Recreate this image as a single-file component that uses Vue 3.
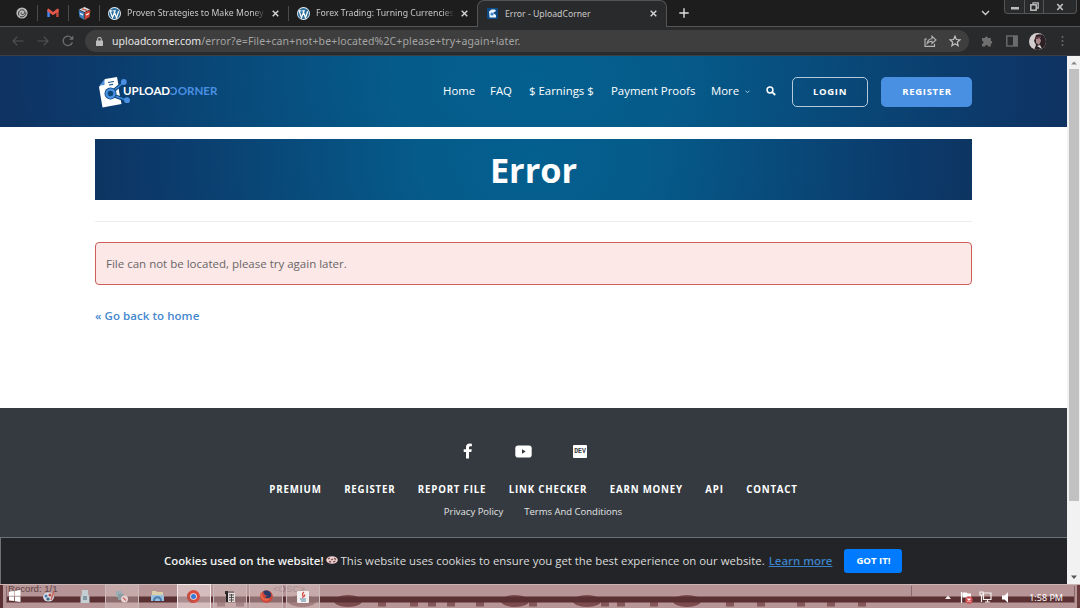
<template>
  <div class="screen">
    <header class="tab-strip">
      <div class="pinned">
        <svg width="12" height="12" viewBox="0 0 12 12">
          <circle cx="6" cy="6" r="5.6" fill="#b9b9b9" />
          <path d="M3 8.6C1.6 5 4 2.4 6.6 2.8c2.4.4 3 3.2 1.2 4.4-1.5 1-3.3-.2-2.5-1.7M4 9.6c3 1 6-1 5.8-4" fill="none" stroke="#333" stroke-width="1" />
        </svg>
      </div>
      <div class="pinned">
        <svg width="12" height="10" viewBox="0 0 12 10">
          <path d="M.3 2v7h2.5V4.2z" fill="#4285f4" />
          <path d="M11.7 2v7H9.2V4.2z" fill="#c5473c" />
          <path d="M.3 1.2 1.6.6 6 4l4.4-3.4 1.3.6v2L6 7.2.3 3.2z" fill="#e4584b" />
        </svg>
      </div>
      <div class="pinned">
        <svg width="13" height="13" viewBox="0 0 13 13">
          <path d="M6.5 0 12 2.5 6.5 5 1 2.5z" fill="#d8dce2" />
          <path d="M.5 3 6.3 5.6V13L1.5 10z" fill="#3f7eb8" />
          <path d="M12.5 3 6.7 5.6V13l4.800-3z" fill="#cf4535" />
          <path d="M2 6.5l3 1.5M8 8l3-1.5" stroke="#fff" stroke-width="1.3" />
          <path d="M4 1.8l5 1.5" stroke="#c9564a" stroke-width="1.3" />
        </svg>
      </div>

      <div v-for="tab in tabs" :key="tab.title" class="tab" :class="{ active: tab.active }">
        <svg v-if="!tab.active" class="favicon" width="13" height="13" viewBox="0 0 13 13">
          <circle cx="6.5" cy="6.5" r="6.5" fill="#e4eef5" />
          <circle cx="6.5" cy="6.5" r="5.6" fill="#2c6f9e" />
          <path d="M2 3.8 4.5 10.6 6.5 5.2 8.5 10.6 10.7 4.2M1.6 3.8h2.8M5.3 3.8h2.6" fill="none" stroke="#fff" stroke-width="1.2" />
        </svg>
        <svg v-else class="favicon" width="11" height="11" viewBox="0 0 11 11">
          <rect width="11" height="11" rx="1" fill="#0b4a86" />
          <path d="M2 3.5 4.5 1.5H8L9 3 6 5l3 2v2.5H2.6z" fill="#eaf3fb" />
          <circle cx="5" cy="6" r="1.6" fill="#3c84cf" />
        </svg>
        <span class="tab-title">{{ tab.title }}</span>
        <svg class="tab-close" width="7" height="7" viewBox="0 0 7 7">
          <path d="M.7.7l5.6 5.6M6.3.7.7 6.3" stroke="#d6d6d6" stroke-width="1.4" />
        </svg>
      </div>

      <svg class="new-tab" width="10" height="10" viewBox="0 0 10 10">
        <path d="M5 .3v9.4M.3 5h9.4" stroke="#dedede" stroke-width="1.4" />
      </svg>
      <svg class="tab-search" width="9" height="6" viewBox="0 0 9 6">
        <path d="M1 1l3.5 3.5L8 1" fill="none" stroke="#cfcfcf" stroke-width="1.4" />
      </svg>
      <div class="window-buttons">
        <span><svg class="minimize" width="8" height="3"><rect width="8" height="2.5" fill="#bdbdbd" /></svg></span>
        <span>
          <svg width="9" height="9" viewBox="0 0 9 9">
            <path d="M3 2.5V.8h5.2V6H6.8" fill="none" stroke="#bdbdbd" stroke-width="1.3" />
            <rect x=".8" y="2.8" width="5.4" height="5.4" fill="none" stroke="#bdbdbd" stroke-width="1.5" />
          </svg>
        </span>
        <span>
          <svg width="8" height="8" viewBox="0 0 8 8">
            <path d="M1.3 1l5.4 6M6.7 1 1.3 7" stroke="#bdbdbd" stroke-width="1.7" />
          </svg>
        </span>
      </div>
    </header>

    <div class="toolbar">
      <svg width="12" height="10" viewBox="0 0 12 10">
        <path d="M11.5 5H1M5.3.7 1 5l4.3 4.3" fill="none" stroke="#505254" stroke-width="1.2" />
      </svg>
      <svg width="12" height="10" viewBox="0 0 12 10">
        <path d="M.5 5H11M6.7.7 11 5 6.7 9.3" fill="none" stroke="#505254" stroke-width="1.2" />
      </svg>
      <svg width="12" height="12" viewBox="0 0 12 12">
        <path d="M10.4 7.2A4.7 4.7 0 1 1 9.5 2.8L10.8 4" fill="none" stroke="#6c6c6c" stroke-width="1.3" />
        <path d="M11.3.6v4.2H7.1z" fill="#6c6c6c" />
      </svg>
      <div class="omnibox">
        <svg width="7" height="9" viewBox="0 0 7 9">
          <rect y="3.5" width="7" height="5.5" rx=".6" fill="#bdbdbd" />
          <path d="M1.7 4V2.3a1.8 1.8 0 0 1 3.6 0V4" fill="none" stroke="#bdbdbd" stroke-width="1.1" />
        </svg>
        <span class="url"><b>uploadcorner.com</b>/error?e=File+can+not+be+located%2C+please+try+again+later.</span>
        <svg width="13" height="12" viewBox="0 0 13 12">
          <path d="M3 4H1v7.3h9.5V8.8" fill="none" stroke="#b4b4b4" stroke-width="1.2" />
          <path d="M3.2 8.4C3.5 5.3 5.4 3.8 8 3.7V1.2L12 5 8 8.5V6.2C6 6.1 4.5 6.8 3.2 8.4z" fill="none" stroke="#b4b4b4" stroke-width="1.1" />
        </svg>
        <svg class="star" width="12" height="12" viewBox="0 0 12 12">
          <path d="M6 1.2 7.4 4.5l3.6.3-2.7 2.4.8 3.5L6 8.8l-3.1 1.9.8-3.5L1 4.8l3.6-.3z" fill="none" stroke="#c4c4c4" stroke-width="1.2" />
        </svg>
      </div>
      <svg class="puzzle" width="12" height="12" viewBox="0 0 12 12">
        <path d="M1 3h2.8a1.6 1.6 0 1 1 3.2 0H9.8v2.8a1.5 1.5 0 1 1 0 3V11.5H7.2a1.6 1.6 0 0 0-3.2 0H1V8.8a1.5 1.5 0 0 0 0-3z" fill="#6f6f6f" />
      </svg>
      <svg class="panel" width="12" height="12" viewBox="0 0 12 12">
        <rect x=".8" y="1" width="10.4" height="10" fill="none" stroke="#6c6c6c" stroke-width="1.4" />
        <rect x="7" y="1" width="4.5" height="10" fill="#6c6c6c" />
      </svg>
      <svg class="avatar" width="17" height="17" viewBox="0 0 17 17">
        <clipPath id="face"><circle cx="8.5" cy="8.5" r="8.5" /></clipPath>
        <g clip-path="url(#face)">
          <rect width="17" height="17" fill="#d3cccd" />
          <path d="M7 2c5-2 8 0 10 3v12H5l2-5-2-4z" fill="#2b2125" />
          <path d="M7 6l4-1 1 3-2 4-3-2z" fill="#a98689" />
          <path d="M8 13l3-1 2 4z" fill="#e4dfe0" />
          <path d="M6 5l6-1" stroke="#6c3d4b" stroke-width="1.5" />
        </g>
      </svg>
      <svg class="kebab" width="3" height="12" viewBox="0 0 3 12">
        <circle v-for="y in [2, 6, 10]" :key="y" cx="1.5" :cy="y" r="1" fill="#6c6c6c" />
      </svg>
    </div>

    <div class="viewport">
      <div class="page">
        <div class="site-header">
          <div class="logo">
            <svg width="34" height="34" viewBox="0 0 34 34">
              <path d="M1 12 7 4l12-2 1.5 8 .5 6 2.5 13L4.500 32.500z" fill="#fff" />
              <path d="M1.5 10.5 6.5 4.5V10z" fill="#4a90e2" />
              <path d="M10 7.5l6-1M11 10l4-.7" stroke="#174f86" stroke-width="1.2" />
              <path d="M14 17 25.5 7.5M14 20l14 5" stroke="#0b4678" stroke-width="3.5" />
              <path d="M14 17 25.5 7.5M14 20l14 5" stroke="#3f86d8" stroke-width="1.5" />
              <circle cx="12.5" cy="18.5" r="6" fill="#0b4678" />
              <circle cx="12.5" cy="18.5" r="4" fill="none" stroke="#4a90e2" stroke-width="2.4" />
              <circle cx="25.8" cy="7" r="2.9" fill="#4a90e2" />
              <circle cx="29" cy="25.2" r="2.9" fill="#4a90e2" />
            </svg>
            <span class="wordmark">UPLOAD<i><em>C</em>ORNER</i></span>
          </div>
          <nav class="nav">
            <a class="home">Home</a>
            <a class="faq">FAQ</a>
            <a class="earnings">$ Earnings $</a>
            <a class="proofs">Payment Proofs</a>
            <a class="more">More</a>
            <svg class="caret" width="5" height="4" viewBox="0 0 5 4">
              <path d="M.5.7l2 2 2-2" fill="none" stroke="#a5c6dd" stroke-width="1" />
            </svg>
            <svg class="search" width="10" height="10" viewBox="0 0 10 10">
              <circle cx="4" cy="4" r="2.9" fill="none" stroke="#fff" stroke-width="1.5" />
              <path d="M6.2 6.2 9.2 9" stroke="#fff" stroke-width="1.8" />
            </svg>
          </nav>
          <a class="btn btn-outline">LOGIN</a>
          <a class="btn btn-primary">REGISTER</a>
        </div>

        <main class="content">
          <h1>Error</h1>
          <div class="rule"></div>
          <div class="alert"><span>File can not be located, please try again later.</span></div>
          <a class="back">« Go back to home</a>
        </main>

        <footer class="site-footer">
          <div class="social">
            <svg width="10" height="16" viewBox="0 0 10 16">
              <path d="M3 15.5V9H.7V6.2H3V4.3C3 2 4.3.6 6.6.6L8.9.8v2.4H7.6C6.4 3.2 6 3.9 6 4.7v1.5h2.8L8.3 9H6v6.5z" fill="#fff" />
            </svg>
            <svg width="17" height="13" viewBox="0 0 17 13">
              <rect x=".3" y=".5" width="16.4" height="12" rx="2.8" fill="#fff" />
              <path d="M7 4.2v4.6l3.7-2.3z" fill="#343a40" />
            </svg>
            <div class="dev">DEV</div>
          </div>
          <div class="links">
            <a v-for="link in footerLinks" :key="link">{{ link }}</a>
          </div>
          <div class="legal">
            <a>Privacy Policy</a>
            <a>Terms And Conditions</a>
          </div>
        </footer>

        <div class="cookies">
          <strong>Cookies used on the website!</strong>
          <svg width="12" height="8" viewBox="0 0 12 8">
            <ellipse cx="6" cy="4" rx="5.8" ry="3.8" fill="#ecd0cf" />
            <path d="M2 3l2-1M5 4l2-1M8 2.3l2 1M3 5.5l2 .5M7 6l2.5-1" stroke="#75484a" stroke-width="1.3" />
          </svg>
          <span>This website uses cookies to ensure you get the best experience on our website.</span>
          <a>Learn more</a>
          <button>GOT IT!</button>
        </div>
      </div>
      <div class="scrollbar">
        <svg width="12" height="13" viewBox="0 0 12 13"><path d="M3 8.5 6 5.5l3 3z" fill="#8a8a8a" /></svg>
        <div class="thumb"></div>
        <svg class="down" width="12" height="13" viewBox="0 0 12 13"><path d="M3 4.5h6l-3 3.5z" fill="#555" /></svg>
      </div>
    </div>

    <div class="taskbar">
      <!-- desktop showing through the glass -->
      <svg class="glass" width="1080" height="24" viewBox="0 0 1080 24">
        <rect width="1080" height="24" fill="#b79495" />
        <path d="M0 .5h1080" stroke="#cbb5b5" />
        <rect y="1" width="3" height="23" fill="#5b3033" />
        <rect x="1077" y="1" width="3" height="23" fill="#6a3c3e" />
        <ellipse v-for="x in letterArcs" :key="x" :cx="x" cy="17" rx="14" ry="6" fill="#7d4c4e" />
        <rect v-for="x in letterStems" :key="x" :x="x" y="18" width="8" height="4.5" fill="#84585a" />
        <rect x="6" y="12.5" width="1068" height="6" fill="#5a3032" />
        <path d="M6.5 2v17M1074.5 2v17M911.5 2v10" stroke="#88686a" />
      </svg>
      <span class="ghost record">Record: 1/1</span>
      <span class="ghost osc">&lt;OSC&gt;</span>

      <div class="apps">
        <div class="app">
          <svg width="12" height="12" viewBox="0 0 12 12">
            <path d="M0 1.7 5 1v4.7H0zM5.7.9 11.5 0v5.7H5.7zM0 6.4h5v4.7l-5-.7zM5.7 6.4h5.8V12l-5.8-.8z" fill="#fff" />
          </svg>
        </div>
        <div class="app">
          <svg width="12" height="13" viewBox="0 0 12 13">
            <ellipse cx="5.5" cy="7" rx="5.5" ry="4.5" fill="#d5dce4" />
            <circle cx="3" cy="6" r="1.5" fill="#4d7eaf" /><circle cx="7" cy="5" r="1.5" fill="#bf463f" />
            <circle cx="5" cy="9" r="1.6" fill="#38607f" /><path d="M11 1 8 10" stroke="#c9655e" stroke-width="1.5" />
          </svg>
        </div>
        <div class="app">
          <svg width="10" height="13" viewBox="0 0 10 13">
            <path d="M2 0h6v4l1.5 3v6H.5V7L2 4z" fill="#c5ced3" />
            <path d="M3 6h4v4H3z" fill="#8499a4" />
          </svg>
        </div>
        <div class="app open">
          <svg width="13" height="13" viewBox="0 0 13 13">
            <path d="M1 1h6v6H1z" fill="#9aafb5" /><path d="M3 4h6v6H3z" fill="#8c9ea2" />
            <circle cx="9.5" cy="9" r="3.5" fill="#ead1d2" /><path d="M8 7.5l3 3" stroke="#cb6c70" stroke-width="1.3" />
          </svg>
        </div>
        <div class="app">
          <svg width="13" height="12" viewBox="0 0 13 12">
            <path d="M1 1h4l1 1h6v8H1z" fill="#dbd0ac" /><path d="M0 5h13v6H0z" fill="#9bc1df" />
            <path d="M3 11c0-5 7-5 7 0" fill="none" stroke="#487fad" stroke-width="2" />
          </svg>
        </div>
        <div class="app open current">
          <svg width="13" height="13" viewBox="0 0 13 13">
            <circle cx="6.5" cy="6.5" r="6.5" fill="#d84d40" />
            <path d="M.9 3.3A6.5 6.5 0 0 0 6 13L8.5 8z" fill="#bd5145" />
            <circle cx="6.5" cy="6.5" r="3.3" fill="#efe9ee" /><circle cx="6.5" cy="6.5" r="2.5" fill="#3579d5" />
          </svg>
        </div>
        <div class="app open">
          <svg width="12" height="13" viewBox="0 0 12 13">
            <path d="M1 1h3v3H1zM2 4h2v8H2z" fill="#222" /><path d="M4 3h7v9H4z" fill="#e3dcda" />
            <path d="M1 2h9M5 5h5M5 7.5h5M5 10h5M7.5 4v8" stroke="#4a4446" stroke-width=".9" />
          </svg>
        </div>
        <div class="app open">
          <svg width="13" height="13" viewBox="0 0 13 13">
            <circle cx="6.5" cy="6.5" r="6.3" fill="#cb473d" />
            <path d="M3 1.5C7-1 12 2 11 6 10 9 6 9 5 7l3-1-3-1z" fill="#293b68" />
            <path d="M1 3c0 5 3 8 8 6" fill="none" stroke="#e56747" stroke-width="2" />
          </svg>
        </div>
        <div class="app open">
          <svg width="12" height="12" viewBox="0 0 12 12">
            <rect width="12" height="12" rx="1" fill="#f2efee" />
            <path d="M7 1C3 4 8 4.5 5.5 7M8 3.5 6.8 6" fill="none" stroke="#d3443e" stroke-width="1.2" />
            <path d="M3 8h6M4 10h5" stroke="#5686a4" stroke-width="1" />
          </svg>
        </div>
      </div>

      <div class="tray">
        <svg width="6" height="4" viewBox="0 0 6 4"><path d="M0 4l3-3.5L6 4z" fill="#f4eeee" /></svg>
        <svg class="flag" width="13" height="13" viewBox="0 0 13 13">
          <path d="M1.5 1v11" stroke="#fff" stroke-width="1.2" /><path d="M2.5 1.5h4l1 1H11v5H7l-1-1H2.5z" fill="#fff" />
          <circle cx="9" cy="9" r="3.7" fill="#d24e50" /><path d="M7.5 7.5l3 3M10.5 7.5l-3 3" stroke="#fff" stroke-width="1.1" />
        </svg>
        <svg class="net" width="13" height="12" viewBox="0 0 13 12">
          <path d="M4.5 2H12v6.5H4.500zM6 11h5M8.5 8.5V11M1 1h3v3H1zM2.5 4v7" fill="none" stroke="#f6efef" stroke-width="1.2" />
        </svg>
        <svg class="sound" width="7" height="11" viewBox="0 0 7 11"><path d="M0 3.5h2.5L6 .3v10.4L2.5 7.5H0z" fill="#fff" /></svg>
        <span class="clock">1:58 PM</span>
      </div>
    </div>
  </div>
</template>

<script setup>
const tabs = [
  { title: 'Proven Strategies to Make Money', active: false },
  { title: 'Forex Trading: Turning Currencies', active: false },
  { title: 'Error - UploadCorner', active: true }
]

const footerLinks = ['PREMIUM', 'REGISTER', 'REPORT FILE', 'LINK CHECKER', 'EARN MONEY', 'API', 'CONTACT']

const letterArcs = [302, 348, 515, 587, 687]
const letterStems = [217, 236, 378, 410, 428, 447, 476, 529, 601, 617, 650, 726, 757, 797, 827, 858]
</script>

<style>
body {
  margin: 0;
  overflow: hidden;
}
</style>

<style scoped>
* {
  box-sizing: border-box;
}

.screen {
  width: 1080px;
  height: 608px;
  display: flex;
  flex-direction: column;
  overflow: hidden;
  font-family: "Open Sans", "Noto Sans", sans-serif;
  background: #fff;
}

svg {
  display: block;
  flex: none;
}

.tab-strip {
  height: 27px;
  flex: none;
  display: flex;
  align-items: center;
  padding-left: 7px;
  background: #1d1d1d;
  border-bottom: 1px solid #555;
}

.pinned {
  width: 31px;
  height: 16px;
  display: flex;
  align-items: center;
  justify-content: center;
  border-right: 1px solid #4b4b4b;
}

.tab {
  position: relative;
  width: 189px;
  height: 27px;
  display: flex;
  align-items: center;
  padding: 0 10px 0 8px;
  font-family: "Noto Sans", sans-serif;
  font-size: 8.7px;
  color: #c9c9c9;
}

.tab:not(.active)::after {
  content: "";
  position: absolute;
  right: 0;
  top: 6px;
  width: 1px;
  height: 15px;
  background: #4b4b4b;
}

.tab:nth-child(5)::after {
  display: none;
}

.tab.active {
  width: 190px;
  margin-left: -1px;
  padding: 0 9px 0 9px;
  background: #292a2b;
  border: 1px solid #555;
  border-bottom: 0;
  border-radius: 7px 7px 0 0;
}

.tab-title {
  flex: 1;
  margin: 0 4px 0 6px;
  white-space: nowrap;
}

.tab.active .tab-title {
  margin-left: 7px;
}

.tab:not(.active) .tab-title {
  mask-image: linear-gradient(90deg, #000 90%, transparent 98%);
}

.new-tab {
  margin-left: 12px;
}

.tab-search {
  margin-left: auto;
}

.window-buttons {
  display: flex;
  align-self: flex-start;
  height: 14px;
  margin: 0 3px 0 14px;
  border: 1px solid #555;
  border-top: 0;
  border-radius: 0 0 4px 4px;
  background: #292a2b;
}

.window-buttons span {
  width: 19px;
  display: flex;
  align-items: center;
  justify-content: center;
}

.window-buttons span + span {
  border-left: 1px solid #555;
}

.window-buttons span:last-child {
  width: 33px;
}

.minimize {
  margin-top: 4px;
}

.toolbar {
  height: 29px;
  flex: none;
  display: flex;
  align-items: center;
  padding-left: 12px;
  background: #292a2b;
  border-bottom: 1px solid #3a3f45;
}

.toolbar > svg + svg {
  margin-left: 13px;
}

.omnibox {
  width: 884px;
  height: 22px;
  display: flex;
  align-items: center;
  margin-left: 11px;
  padding: 0 8px 0 11px;
  border-radius: 11px;
  background: #3e3e3e;
}

.url {
  flex: 1;
  margin-left: 9px;
  font-family: "Noto Sans", sans-serif;
  font-size: 10.5px;
  letter-spacing: 0.14px;
  color: #a4a4a4;
  white-space: nowrap;
}

.url b {
  font-weight: 400;
  letter-spacing: 0;
  color: #e6e6e6;
}

.star {
  margin-left: 12px;
}

.toolbar .puzzle {
  margin-left: 12px;
}

.toolbar .avatar {
  margin-left: 11px;
}

.toolbar .kebab {
  margin-left: 15px;
}

.viewport {
  height: 528px;
  flex: none;
  display: flex;
}

.page {
  width: 1067px;
  display: flex;
  flex-direction: column;
}

.site-header {
  height: 71px;
  flex: none;
  display: flex;
  align-items: center;
  padding: 0 95px 0 98px;
  background: radial-gradient(ellipse 570px 420px at 50% 30%, #04608f 0%, #055b8a 25%, #0b3c6d 75%, #102f5e 100%);
}

.logo {
  width: 345px;
  display: flex;
  align-items: center;
}

.wordmark {
  margin: 0 0 2px -9px;
  font-family: Lato, sans-serif;
  font-size: 11.5px;
  font-weight: 700;
  color: #fff;
}

.wordmark i {
  font-style: normal;
  color: #4a90e2;
}

.wordmark em {
  display: inline-block;
  font-style: normal;
  transform: scaleX(-1);
}

.nav {
  width: 349px;
  display: flex;
  align-items: center;
  padding-bottom: 2px;
  font-size: 11.4px;
  line-height: 15px;
  color: #fff;
  white-space: nowrap;
}

.home {
  width: 47px;
}

.faq {
  width: 39px;
}

.earnings {
  width: 82px;
}

.proofs {
  width: 100px;
}

.more {
  width: 34px;
}

.caret {
  margin-top: 2px;
}

.search {
  margin: 1px 0 0 16px;
}

.btn {
  height: 30px;
  display: flex;
  align-items: center;
  justify-content: center;
  border-radius: 5px;
  font-size: 9.5px;
  font-weight: 700;
  letter-spacing: 0.7px;
  color: #fff;
}

.btn-outline {
  width: 76px;
  border: 1px solid #b4cadc;
}

.btn-primary {
  width: 91px;
  margin-left: 13px;
  padding-left: 1px;
  background: #4a90e2;
}

.content {
  height: 281px;
  flex: none;
  display: flex;
  flex-direction: column;
  padding: 12px 95px 0 95px;
}

h1 {
  height: 61px;
  margin: 0;
  display: flex;
  align-items: center;
  justify-content: center;
  background: radial-gradient(ellipse 460px 360px at 50% 30%, #04608f 0%, #055b8a 25%, #0b3c6d 78%, #0e335f 100%);
  font-size: 34.3px;
  font-weight: 700;
  color: #fff;
}

.rule {
  height: 1px;
  margin-top: 21px;
  background: #ececec;
}

.alert {
  height: 43px;
  display: flex;
  align-items: center;
  margin-top: 20px;
  padding: 0 0 1px 10px;
  border: 1px solid #cd5c5b;
  border-radius: 4px;
  background: #fde8e8;
  font-size: 11.5px;
  color: #666;
}

.back {
  margin-top: 23px;
  font-size: 11.5px;
  line-height: 16px;
  font-weight: 600;
  letter-spacing: 0.06px;
  color: #4588d0;
}

.site-footer {
  height: 129px;
  flex: none;
  display: flex;
  flex-direction: column;
  align-items: center;
  background: #343a40;
  color: #fff;
}

.social {
  height: 20px;
  display: flex;
  align-items: center;
  gap: 41.5px;
  margin: 33px 17px 0 0;
}

.dev {
  width: 14px;
  height: 13px;
  border-radius: 1px;
  background: #fff;
  color: #343a40;
  font-family: "Liberation Mono", monospace;
  font-size: 6.5px;
  font-weight: 700;
  line-height: 13px;
  text-align: center;
}

.links {
  display: flex;
  gap: 22.5px;
  margin-top: 21px;
  font-size: 9.7px;
  line-height: 15px;
  font-weight: 700;
  letter-spacing: 0.8px;
  white-space: nowrap;
}

.legal {
  display: flex;
  gap: 21px;
  margin: 8px 1px 0 0;
  font-size: 9.5px;
  line-height: 14px;
  color: #e4e4e4;
}

.cookies {
  height: 47px;
  flex: none;
  display: flex;
  align-items: center;
  padding: 0 0 2px 163px;
  background: #222427;
  border: 1px solid #6c7175;
  border-width: 1px 0 0 1px;
  font-size: 11.4px;
  color: #dcdcdc;
  white-space: nowrap;
}

.cookies strong {
  font-weight: 600;
  color: #f1f1f1;
}

.cookies svg {
  margin: 0 3px 0 2px;
}

.cookies a {
  margin-left: 4px;
  font-weight: 600;
  font-size: 11.4px;
  color: #3b82c8;
  text-decoration: underline;
}

.cookies button {
  width: 58px;
  height: 24px;
  margin: 1px 0 0 12px;
  padding: 0;
  border: 0;
  border-radius: 3px;
  background: #007bff;
  color: #fff;
  font-family: inherit;
  font-size: 9.6px;
  font-weight: 700;
}

.scrollbar {
  width: 13px;
  display: flex;
  flex-direction: column;
  align-items: center;
  background: #f2f2f2;
}

.thumb {
  width: 10px;
  height: 432px;
  background: #c1c1c1;
}

.down {
  margin-top: auto;
}

.taskbar {
  position: relative;
  height: 24px;
  flex: none;
  display: flex;
  justify-content: space-between;
}

.glass {
  position: absolute;
  inset: 0;
}

.ghost {
  position: absolute;
  top: -1px;
  font-family: "Liberation Sans", sans-serif;
  font-size: 9.6px;
  line-height: 11px;
  color: #5e4447;
}

.record {
  left: 8px;
}

.osc {
  left: 273px;
  color: #8a6b6d;
}

.apps {
  position: relative;
  display: flex;
  gap: 2.2px;
}

.app {
  width: 34px;
  height: 24px;
  display: flex;
  align-items: center;
  justify-content: center;
}

.app:first-child {
  width: 30px;
}

.app.open {
  background: rgba(218, 203, 200, 0.4);
  border: 1px solid #cdbaba;
  border-bottom: 0;
}

.app.current {
  background: rgba(238, 222, 222, 0.55);
  border-color: #f3e9e9;
}

.tray {
  position: relative;
  display: flex;
  align-items: center;
  padding: 2px 17px 0 0;
}

.flag {
  margin-left: 9px;
}

.net {
  margin-left: 6px;
}

.sound {
  margin-left: 10px;
}

.clock {
  margin-left: 20px;
  font-family: "Noto Sans", sans-serif;
  font-size: 9px;
  color: #fff;
}
</style>
